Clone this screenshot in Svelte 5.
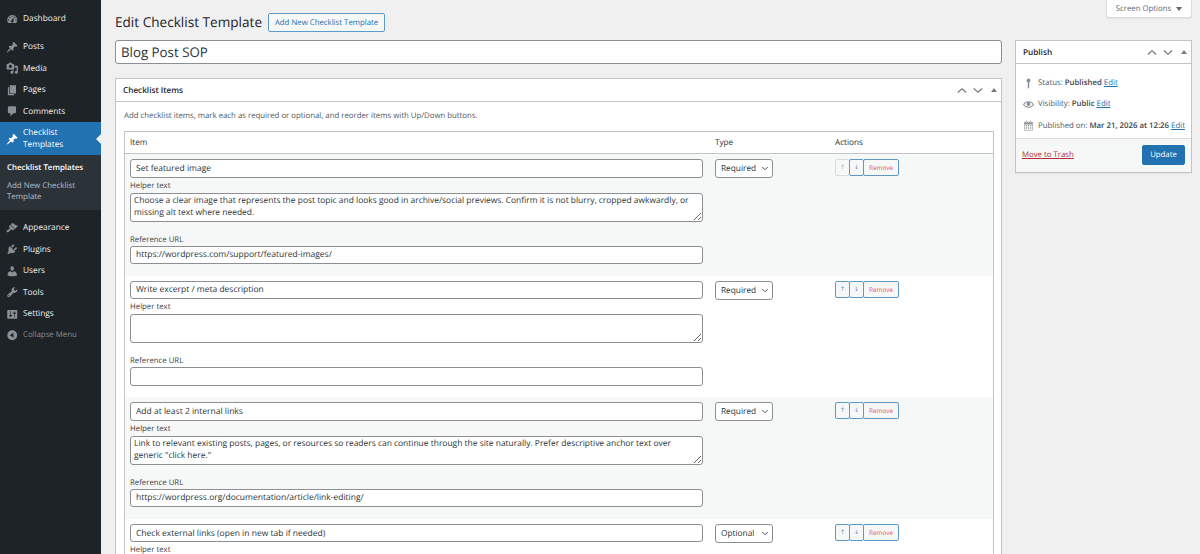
<script lang="ts">
  const icons: Record<string, string> = {
    dashboard: 'M3.76 16h12.48c1.1-1.37 1.76-3.11 1.76-5 0-4.42-3.58-8-8-8s-8 3.58-8 8c0 1.89.66 3.63 1.76 5zM10 4c.55 0 1 .45 1 1s-.45 1-1 1-1-.45-1-1 .45-1 1-1zM6 6c.55 0 1 .45 1 1s-.45 1-1 1-1-.45-1-1 .45-1 1-1zm8 0c.55 0 1 .45 1 1s-.45 1-1 1-1-.45-1-1 .45-1 1-1zm-5.37 5.55L12 7v6c0 1.1-.9 2-2 2s-2-.9-2-2c0-.57.24-1.08.63-1.45zM4 10c.55 0 1 .45 1 1s-.45 1-1 1-1-.45-1-1 .45-1 1-1zm12 0c.55 0 1 .45 1 1s-.45 1-1 1-1-.45-1-1 .45-1 1-1z',
    pin: 'M10.44 3.02l1.82-1.82 6.36 6.35-1.83 1.82c-1.05-.68-2.48-.57-3.41.36l-.75.75c-.92.93-1.04 2.35-.35 3.41l-1.83 1.82-2.41-2.41-2.8 2.79c-.42.42-3.38 2.71-3.8 2.29s1.86-3.39 2.28-3.81l2.79-2.79L4.1 9.36l1.83-1.82c1.05.69 2.48.57 3.4-.36l.75-.75c.93-.92 1.05-2.35.36-3.41z',
    media: 'M13 11V4c0-.55-.45-1-1-1h-1.67L9 1H5L3.67 3H2c-.55 0-1 .45-1 1v7c0 .55.45 1 1 1h10c.55 0 1-.45 1-1zM7 4.5c1.38 0 2.5 1.12 2.5 2.5S8.38 9.5 7 9.5 4.5 8.38 4.5 7 5.62 4.5 7 4.5zM14 6h5v10.5c0 1.38-1.12 2.5-2.5 2.5S14 17.88 14 16.5s1.12-2.5 2.5-2.5c.17 0 .34.02.5.05V9h-3V6zm-4 8.05V13h2v3.5c0 1.38-1.12 2.5-2.5 2.5S7 17.88 7 16.5 8.12 14 9.5 14c.17 0 .34.02.5.05z',
    pages: 'M6 15V2h10v13H6zm-1 1h8v2H3V5h2v11z',
    comments: 'M5 2h9c1.1 0 2 .9 2 2v7c0 1.1-.9 2-2 2h-2l-5 5v-5H5c-1.1 0-2-.9-2-2V4c0-1.1.9-2 2-2z',
    appearance: 'M14.48 11.06L7.41 3.99l1.5-1.5c.5-.56 2.3-.47 3.51.32 1.21.8 1.43 1.28 2.91 2.1 1.18.64 2.45 1.26 4.45.85zm-.71.71L6.7 4.7 4.93 6.47c-.39.39-.39 1.02 0 1.41l1.06 1.06c.39.39.39 1.03 0 1.42-.6.6-1.43 1.11-2.21 1.69-.35.26-.7.53-1.01.84C1.43 13.23.4 14.85 1.1 15.9c.7 1 2.65.65 3.99-.69.31-.31.58-.65.84-1.01.58-.78 1.09-1.61 1.69-2.21.39-.39 1.03-.39 1.42 0l1.06 1.06c.39.39 1.02.39 1.41 0z',
    plugins: 'M13.11 4.36L9.87 7.6 8 5.73l3.24-3.24c.35-.34 1.05-.2 1.56.32.52.51.66 1.21.31 1.55zm-8 1.77l.91-1.12 9.01 9.01-1.19.84c-.71.71-2.63 1.16-3.82 1.16H6.14L4.9 17.26c-.59.59-1.54.59-2.12 0-.59-.58-.59-1.53 0-2.12l1.24-1.24v-3.88c0-1.13.4-3.19 1.09-3.89zm7.26 3.97l3.24-3.24c.34-.35 1.04-.21 1.55.31.52.51.66 1.21.31 1.55l-3.24 3.25z',
    users: 'M10 9.25c-2.27 0-2.73-3.44-2.73-3.44C7 4.02 7.82 2 9.97 2c2.16 0 2.98 2.02 2.71 3.81 0 0-.41 3.44-2.68 3.44zm0 2.57L12.72 10c2.39 0 4.52 2.33 4.52 4.53v2.49s-3.65 1.13-7.24 1.13c-3.65 0-7.24-1.13-7.24-1.13v-2.49c0-2.25 1.94-4.48 4.47-4.48z',
    tools: 'M16.68 9.77c-1.34 1.34-3.3 1.67-4.95.99l-5.41 6.52c-.99.99-2.59.99-3.58 0s-.99-2.59 0-3.57l6.52-5.42c-.68-1.65-.35-3.61.99-4.95 1.28-1.28 3.12-1.62 4.72-1.06l-2.89 2.89 2.82 2.82 2.86-2.87c.53 1.58.18 3.39-1.08 4.65zM3.81 16.21c.4.39 1.04.39 1.43 0 .4-.4.4-1.04 0-1.43-.39-.4-1.03-.4-1.43 0-.39.39-.39 1.03 0 1.43z',
    settings: 'M18 16V4c0-.55-.45-1-1-1H3c-.55 0-1 .45-1 1v12c0 .55.45 1 1 1h14c.55 0 1-.45 1-1zM8 11h1c.55 0 1 .45 1 1s-.45 1-1 1H8v1.5c0 .28-.22.5-.5.5s-.5-.22-.5-.5V13H6c-.55 0-1-.45-1-1s.45-1 1-1h1V5.5c0-.28.22-.5.5-.5s.5.22.5.5V11zm5-2h-1c-.55 0-1-.45-1-1s.45-1 1-1h1V5.5c0-.28.22-.5.5-.5s.5.22.5.5V7h1c.55 0 1 .45 1 1s-.45 1-1 1h-1v5.5c0 .28-.22.5-.5.5s-.5-.22-.5-.5V9z',
    collapse: 'M10 2.16c4.33 0 7.84 3.51 7.84 7.84s-3.51 7.84-7.84 7.84S2.16 14.33 2.16 10 5.71 2.16 10 2.16zm2 11.72V6.12L6.18 9.97z',
    status: 'M10 1a3.6 3.6 0 0 1 1.3 6.96V17.5L10 19.5l-1.3-2V7.96A3.6 3.6 0 0 1 10 1z',
    eye: 'M19.7 9.4C17.7 6 14 3.9 10 3.9S2.3 6 .3 9.4L0 10l.3.6c2 3.4 5.7 5.5 9.7 5.5s7.7-2.1 9.7-5.5l.3-.6-.3-.6zM10 14.1c-3.1 0-6-1.6-7.7-4.1C3.6 8 5.7 6.6 8 6.1c-.9.6-1.5 1.7-1.5 2.9 0 1.9 1.6 3.5 3.5 3.5s3.5-1.6 3.5-3.5c0-1.2-.6-2.3-1.5-2.9 2.3.5 4.4 1.9 5.7 3.9-1.7 2.5-4.6 4.1-7.7 4.1z',
    calendar: 'M15 4h3v15H2V4h3V3c0-.41.15-.76.44-1.06.29-.29.65-.44 1.06-.44s.77.15 1.06.44c.29.3.44.65.44 1.06v1h4V3c0-.41.15-.76.44-1.06.29-.29.65-.44 1.06-.44s.77.15 1.06.44c.29.3.44.65.44 1.06v1zM6 3v2.5c0 .14.05.26.15.36.09.09.21.14.35.14s.26-.05.35-.14c.1-.1.15-.22.15-.36V3c0-.14-.05-.26-.15-.35-.09-.1-.21-.15-.35-.15s-.26.05-.35.15c-.1.09-.15.21-.15.35zm7 0v2.5c0 .14.05.26.14.36.1.09.22.14.36.14s.26-.05.36-.14c.09-.1.14-.22.14-.36V3c0-.14-.05-.26-.14-.35-.1-.1-.22-.15-.36-.15s-.26.05-.36.15c-.09.09-.14.21-.14.35zm4 15V8H3v10h14zM7 9v2H5V9h2zm2 0h2v2H9V9zm4 2V9h2v2h-2zm-6 1v2H5v-2h2zm2 0h2v2H9v-2zm4 2v-2h2v2h-2zm-6 1v2H5v-2h2zm4 2H9v-2h2v2zm4 0h-2v-2h2v2z'
  }

  const topMenu = [
    { label: 'Posts', icon: 'pin' },
    { label: 'Media', icon: 'media' },
    { label: 'Pages', icon: 'pages' },
    { label: 'Comments', icon: 'comments' }
  ]
  const bottomMenu = [
    { label: 'Appearance', icon: 'appearance' },
    { label: 'Plugins', icon: 'plugins' },
    { label: 'Users', icon: 'users' },
    { label: 'Tools', icon: 'tools' },
    { label: 'Settings', icon: 'settings' }
  ]

  const items = [
    {
      title: 'Set featured image',
      helper: 'Choose a clear image that represents the post topic and looks good in archive/social previews. Confirm it is not blurry, cropped awkwardly, or missing alt text where needed.',
      url: 'https://wordpress.com/support/featured-images/',
      type: 'Required'
    },
    { title: 'Write excerpt / meta description', helper: '', url: '', type: 'Required' },
    {
      title: 'Add at least 2 internal links',
      helper: 'Link to relevant existing posts, pages, or resources so readers can continue through the site naturally. Prefer descriptive anchor text over generic "click here."',
      url: 'https://wordpress.org/documentation/article/link-editing/',
      type: 'Required'
    },
    { title: 'Check external links (open in new tab if needed)', helper: '', url: '', type: 'Optional' }
  ]
</script>

{#snippet icon(name: string)}
  <svg class="dash" viewBox="0 0 20 20" aria-hidden="true"><path d={icons[name]} /></svg>
{/snippet}

{#snippet handles()}
  <div class="handles">
    <svg viewBox="0 0 12 8" aria-hidden="true"><path d="M1 6.5 6 2l5 4.5" /></svg>
    <svg viewBox="0 0 12 8" aria-hidden="true"><path d="M1 1.5 6 6l5-4.5" /></svg>
    <i></i>
  </div>
{/snippet}

<div class="page">
  <nav class="sidebar">
    <ul class="menu first">
      <li>{@render icon('dashboard')}<span>Dashboard</span></li>
    </ul>
    <ul class="menu">
      {#each topMenu as m}
        <li>{@render icon(m.icon)}<span>{m.label}</span></li>
      {/each}
      <li class="current">{@render icon('pin')}<span>Checklist Templates</span></li>
    </ul>
    <ul class="submenu">
      <li class="active">Checklist Templates</li>
      <li>Add New Checklist Template</li>
    </ul>
    <ul class="menu after">
      {#each bottomMenu as m}
        <li>{@render icon(m.icon)}<span>{m.label}</span></li>
      {/each}
      <li class="collapse">{@render icon('collapse')}<span>Collapse Menu</span></li>
    </ul>
  </nav>

  <div class="content">
    <div class="screen-row">
      <button type="button" class="screen-options">Screen Options <i></i></button>
    </div>
    <div class="columns">
      <main class="left">
        <div class="heading">
          <h1>Edit Checklist Template</h1>
          <button type="button" class="add-new">Add New Checklist Template</button>
        </div>
        <input class="title-input" type="text" value="Blog Post SOP" />

        <section class="box items-box">
          <header class="box-head">
            <h2>Checklist Items</h2>
            {@render handles()}
          </header>
          <div class="items-body">
            <p class="hint">Add checklist items, mark each as required or optional, and reorder items with Up/Down buttons.</p>
            <div class="table">
              <div class="row head">
                <div>Item</div>
                <div>Type</div>
                <div>Actions</div>
              </div>
              {#each items as item, i}
                <div class="row" class:alt={i % 2 === 0}>
                  <div class="fields">
                    <input type="text" value={item.title} />
                    <label for="helper-{i}">Helper text</label>
                    <textarea id="helper-{i}" value={item.helper}></textarea>
                    <label class="url-label" for="url-{i}">Reference URL</label>
                    <input id="url-{i}" type="text" value={item.url} />
                  </div>
                  <div>
                    <span class="select-wrap">
                      <select value={item.type}>
                        <option>Required</option>
                        <option>Optional</option>
                      </select>
                      <svg viewBox="0 0 12 8" aria-hidden="true"><path d="M1.5 1.5 6 6l4.5-4.5" /></svg>
                    </span>
                  </div>
                  <div class="actions">
                    <button type="button" disabled={i === 0}>↑</button>
                    <button type="button">↓</button>
                    <button type="button" class="remove">Remove</button>
                  </div>
                </div>
              {/each}
            </div>
          </div>
        </section>
      </main>

      <aside class="right">
        <section class="box publish">
          <header class="box-head">
            <h2>Publish</h2>
            {@render handles()}
          </header>
          <div class="pub-body">
            <div class="pub-line">{@render icon('status')}<span>Status: <b>Published</b> <a href="#s">Edit</a></span></div>
            <div class="pub-line">{@render icon('eye')}<span>Visibility: <b>Public</b> <a href="#v">Edit</a></span></div>
            <div class="pub-line">{@render icon('calendar')}<span>Published on: <b>Mar 21, 2026 at 12:26</b> <a href="#d">Edit</a></span></div>
          </div>
          <div class="pub-actions">
            <a class="trash" href="#t">Move to Trash</a>
            <button type="button" class="update">Update</button>
          </div>
        </section>
      </aside>
    </div>
  </div>
</div>

<style>
  :global(body) {
    background: #f0f0f1;
    font-family: "Open Sans", "Noto Sans", sans-serif;
    font-size: 7.8px;
    color: #50575e;
    text-rendering: geometricPrecision;
  }

  .page {
    display: flex;
    height: 554px;
    overflow: hidden;
  }

  ul {
    list-style: none;
    margin: 0;
    padding: 0;
  }

  /* admin menu */
  .sidebar {
    width: 101px;
    flex-shrink: 0;
    background: #1d2327;
    color: #f0f0f1;
    padding-top: 8px;
  }

  .menu {
    font-size: 8.3px;
  }

  .menu li {
    display: flex;
    align-items: center;
    height: 21.6px;
    padding-left: 6px;
    gap: 4.5px;
  }

  .menu li span {
    line-height: 11.5px;
    max-width: 60px;
  }

  .menu.first {
    margin-bottom: 6.5px;
  }

  .dash {
    width: 12.5px;
    height: 12.5px;
    flex-shrink: 0;
    fill: #8c8f94;
  }

  .menu li.current {
    height: 33px;
    background: #2271b1;
    color: #fff;
    position: relative;
  }

  .menu li.current .dash {
    fill: #fff;
  }

  .menu li.current::after {
    content: '';
    position: absolute;
    right: 0;
    top: 11.5px;
    border: 5px solid transparent;
    border-right-color: #f0f0f1;
    border-left: none;
  }

  .submenu {
    background: #2c3338;
    padding: 6px 0 4px;
    font-size: 7.9px;
    line-height: 11.5px;
    color: rgba(240, 246, 252, 0.7);
  }

  .submenu li {
    padding: 2px 7px;
  }

  .submenu .active {
    color: #fff;
    font-weight: 600;
    padding-bottom: 4px;
  }

  .menu.after {
    margin-top: 7px;
  }

  .menu .collapse {
    color: #8c8f94;
    font-size: 7.8px;
  }

  /* main area */
  .content {
    flex: 1;
    min-width: 0;
    padding-right: 8px;
  }

  .screen-row {
    display: flex;
    justify-content: flex-end;
    height: 0;
  }

  .screen-options {
    height: 18px;
    width: 86px;
    padding: 0;
    background: #fff;
    border: 1px solid #dcdcde;
    border-top: none;
    border-radius: 0 0 3px 3px;
    color: #646970;
    font: inherit;
    text-rendering: inherit;
    display: flex;
    align-items: center;
    justify-content: center;
    gap: 5px;
    box-shadow: 0 1px 1px rgba(0, 0, 0, 0.06);
  }

  .screen-options i {
    border: 3px solid transparent;
    border-top: 4px solid #646970;
    border-bottom: none;
  }

  .columns {
    display: flex;
    gap: 13px;
    padding-left: 14px;
  }

  .left {
    width: 887px;
    flex-shrink: 0;
  }

  .right {
    width: 177px;
    flex-shrink: 0;
    padding-top: 40px;
  }

  .heading {
    display: flex;
    align-items: center;
    gap: 6px;
    padding-top: 13px;
    height: 19px;
  }

  h1 {
    margin: 0 0 1px;
    font-size: 13.6px;
    line-height: 18px;
    font-weight: 400;
    color: #1d2327;
  }

  .add-new {
    height: 19px;
    width: 117px;
    padding: 0;
    font: inherit;
    text-rendering: inherit;
    color: #2271b1;
    background: #f6f7f7;
    border: 1px solid #5e9ac9;
    border-radius: 2px;
  }

  input, textarea, select {
    box-sizing: border-box;
    font: inherit;
    font-size: 8.5px;
    text-rendering: inherit;
    color: #2c3338;
    background: #fff;
    border: 1px solid #8c8f94;
    border-radius: 3px;
    margin: 0;
    outline: none;
  }

  .title-input {
    display: block;
    width: 100%;
    height: 24px;
    margin-top: 8px;
    padding: 0 5px;
    font-size: 13.3px;
  }

  .box {
    background: #fff;
    border: 1px solid #c3c4c7;
    box-shadow: 0 1px 1px rgba(0, 0, 0, 0.04);
  }

  .items-box {
    margin-top: 14px;
  }

  .box-head {
    display: flex;
    align-items: center;
    justify-content: space-between;
    height: 22px;
    padding: 0 4px 0 7px;
    border-bottom: 1px solid #c3c4c7;
  }

  h2 {
    margin: 0;
    font-size: 8.2px;
    font-weight: 600;
    color: #1d2327;
  }

  .handles {
    display: flex;
    align-items: center;
    gap: 6px;
  }

  .handles svg {
    width: 10px;
    height: 7px;
    fill: none;
    stroke: #787c82;
    stroke-width: 1.5;
  }

  .handles i {
    margin-left: 2px;
    border: 3px solid transparent;
    border-bottom: 4px solid #787c82;
    border-top: none;
  }

  .items-body {
    padding: 0 7px 20px 8px;
  }

  .hint {
    margin: 0;
    padding: 8px 0 9px;
    line-height: 12px;
  }

  .table {
    border: 1px solid #c3c4c7;
  }

  .row {
    display: grid;
    grid-template-columns: 585px 120px 1fr;
    padding: 5px 5px 12px 5px;
    height: 104.6px;
  }

  .row.head {
    height: 22px;
    box-sizing: border-box;
    align-items: center;
    padding: 0 5px;
    border-bottom: 1px solid #c3c4c7;
    color: #2c3338;
    font-size: 8.2px;
  }

  .row.alt {
    background: #f6f7f7;
  }

  .fields {
    display: flex;
    flex-direction: column;
    width: 573px;
  }

  .fields input {
    height: 18.5px;
    padding: 0 5px;
    flex-shrink: 0;
  }

  .fields label {
    line-height: 11px;
    margin: 3px 0 1px;
    color: #3c434a;
  }

  .fields textarea {
    height: 29px;
    padding: 1.5px 1px 1.5px 3px;
    font-size: 8.45px;
    line-height: 12px;
    flex-shrink: 0;
    overflow: hidden;
  }

  .fields .url-label {
    margin: 13px 0 0;
  }

  .select-wrap {
    display: inline-block;
    position: relative;
    height: 19px;
  }

  select {
    appearance: none;
    width: 58px;
    height: 19px;
    padding: 0 14px 0 5px;
    font-size: 8.3px;
  }

  .select-wrap svg {
    position: absolute;
    right: 4px;
    top: 7px;
    width: 8px;
    height: 5px;
    fill: none;
    stroke: #50575e;
    stroke-width: 1.6;
  }

  .actions {
    display: flex;
    align-items: flex-start;
  }

  .actions button {
    width: 15px;
    height: 17px;
    padding: 0;
    margin-right: -1px;
    font-family: "DejaVu Sans", sans-serif;
    font-size: 6px;
    text-rendering: inherit;
    color: #4f8dbf;
    background: #f6f7f7;
    border: 1px solid #5e9ac9;
    border-radius: 2px;
  }

  .actions button:disabled {
    color: #a7aaad;
    border-color: #dcdcde;
    background: #f6f7f7;
  }

  .actions .remove {
    width: 36px;
    font-family: inherit;
    font-size: 6.4px;
    color: #d9555a;
  }

  .publish .box-head {
    padding-left: 7px;
  }

  .pub-body {
    padding: 8.5px 7px 1.5px;
  }

  .pub-line {
    display: flex;
    align-items: center;
    gap: 4px;
    height: 21.3px;
    white-space: nowrap;
  }

  .pub-line .dash {
    width: 11px;
    height: 11px;
    fill: #8c8f94;
  }

  b {
    font-weight: 600;
    color: #3c434a;
  }

  a {
    color: #2271b1;
  }

  .pub-actions {
    display: flex;
    align-items: center;
    justify-content: space-between;
    height: 33px;
    padding: 0 6px;
    background: #f6f7f7;
    border-top: 1px solid #dcdcde;
  }

  .trash {
    color: #b32d2e;
  }

  .update {
    width: 43px;
    height: 20px;
    padding: 0;
    font: inherit;
    text-rendering: inherit;
    color: #fff;
    background: #2271b1;
    border: 1px solid #2271b1;
    border-radius: 2px;
  }
</style>
